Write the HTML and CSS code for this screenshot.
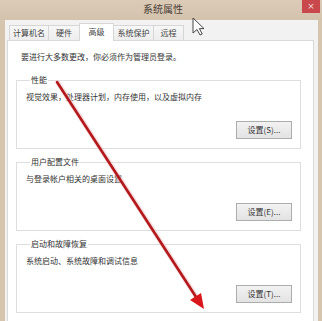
FILE: index.html
```html
<!DOCTYPE html>
<html lang="zh-CN">
<head>
<meta charset="utf-8">
<link rel="stylesheet" href="styles.css">
</head>
<body>
<div class="win">
  <div class="titlebar">
    <span class="title">系统属性</span>
    <span class="close">×</span>
  </div>
  <div class="frame">
    <div class="tabs">
      <div class="tab t1">计算机名</div>
      <div class="tab t2">硬件</div>
      <div class="tab active">高级</div>
      <div class="tab t4">系统保护</div>
      <div class="tab t5">远程</div>
    </div>
    <div class="panel">
      <p class="note">要进行大多数更改，你必须作为管理员登录。</p>
      <fieldset class="group">
        <legend>性能</legend>
        <div class="inner">
          <p class="desc">视觉效果，处理器计划，内存使用，以及虚拟内存</p>
          <div class="btnrow"><button class="btn">设置(S)...</button></div>
        </div>
      </fieldset>
      <fieldset class="group">
        <legend>用户配置文件</legend>
        <div class="inner">
          <p class="desc">与登录帐户相关的桌面设置</p>
          <div class="btnrow"><button class="btn">设置(E)...</button></div>
        </div>
      </fieldset>
      <fieldset class="group">
        <legend>启动和故障恢复</legend>
        <div class="inner">
          <p class="desc">系统启动、系统故障和调试信息</p>
          <div class="btnrow"><button class="btn">设置(T)...</button></div>
        </div>
      </fieldset>
    </div>
  </div>
  <svg class="overlay" width="322" height="321" viewBox="0 0 322 321">
    <line x1="58" y1="83" x2="199" y2="301" stroke="#f3c9c9" stroke-width="5" stroke-linecap="round" opacity="0.6"/>
    <line x1="57" y1="82" x2="198" y2="300" stroke="#b3191c" stroke-width="2.6" stroke-linecap="round"/>
    <polygon points="204,309 190,300 201,293" fill="#d8161b"/>
    <path d="M193 18 L193 33 L197 29.5 L200 35 L202.2 34 L199.4 28.6 L204 28.6 Z" fill="#ffffff" stroke="#333" stroke-width="0.9" stroke-linejoin="round"/>
  </svg>
</div>
</body>
</html>
```
FILE: styles.css
```css
* { box-sizing: border-box; }
html, body { margin: 0; padding: 0; }
body {
  width: 322px;
  height: 321px;
  overflow: hidden;
  background: #d5c4ae;
  font-family: "Noto Sans CJK SC", "Noto Sans", sans-serif;
  color: #333;
}
.win {
  position: relative;
  width: 322px;
  height: 321px;
  display: flex;
  flex-direction: column;
}
.titlebar {
  height: 20px;
  flex: none;
  display: flex;
  align-items: flex-start;
  justify-content: center;
  background: linear-gradient(#dccbb7, #d3c2ac);
  position: relative;
}
.title {
  font-size: 10px;
  line-height: 18px;
  color: #4a4038;
  margin-left: 4px;
}
.close {
  position: absolute;
  right: 2px;
  top: 0;
  width: 18px;
  height: 13px;
  background: #c9484c;
  color: #f4dede;
  font-size: 9px;
  line-height: 12px;
  text-align: center;
  font-family: "DejaVu Sans", sans-serif;
}
.frame {
  flex: 1;
  margin: 0 4px 0 5px;
  background: #f2f2f2;
  padding: 3px 4px 0 2px;
  display: flex;
  flex-direction: column;
}
.tabs {
  display: flex;
  height: 17px;
  padding-left: 2px;
  align-items: flex-end;
  position: relative;
  z-index: 1;
}
.tab {
  height: 15px;
  font-size: 8px;
  line-height: 13px;
  border: 1px solid #d6d6d6;
  border-bottom: none;
  background: linear-gradient(#f7f7f7, #ededed);
  color: #444;
  text-align: center;
  margin-right: -1px;
}
.t1 { width: 40px; }
.t2 { width: 32px; }
.t4 { width: 41px; }
.t5 { width: 31px; }
.tab.active {
  width: 35px;
  height: 18px;
  margin-bottom: -1px;
  background: #ffffff;
  line-height: 15px;
  position: relative;
  z-index: 2;
}
.panel {
  flex: 1;
  background: #ffffff;
  border: 1px solid #d9d9d9;
  border-bottom: none;
  padding: 11px 12px 0 8px;
}
.note {
  margin: 0 0 13px 5px;
  font-size: 8px;
  line-height: 10px;
  color: #333;
}
.group {
  margin: 0 0 8px 0;
  padding: 0 8px 0 9px;
  border: 1px solid #dedede;
  min-width: 0;
}
.group legend {
  font-size: 8px;
  line-height: 10px;
  padding: 0 1px;
  margin-left: 4px;
  color: #333;
}
.inner {
  height: 63px;
  display: flex;
  flex-direction: column;
  padding: 7px 0 9px 0;
}
.desc {
  margin: 0;
  font-size: 8px;
  line-height: 10px;
  color: #333;
}
.btnrow {
  margin-top: auto;
  display: flex;
  justify-content: flex-end;
}
.btn {
  width: 56px;
  height: 18px;
  padding: 0;
  border: 1px solid #adadad;
  background: linear-gradient(#f2f2f2, #e3e3e3);
  font-family: "Noto Sans CJK SC", "Noto Sans", sans-serif;
  font-size: 8px;
  line-height: 14px;
  color: #333;
}
.overlay {
  position: absolute;
  left: 0;
  top: 0;
  pointer-events: none;
}
```
